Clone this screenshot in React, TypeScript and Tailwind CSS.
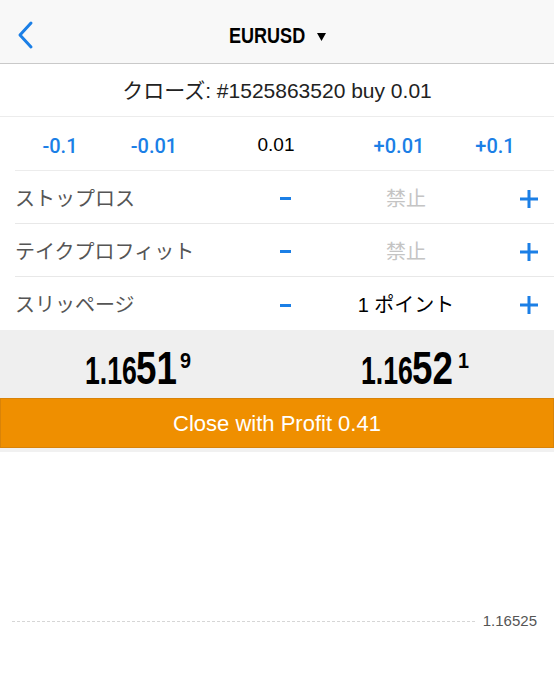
import { ReactNode } from 'react';

const BLUE = 'text-[#1b7fe6]';

const Minus = () => <span className="block w-[11px] h-[3px] bg-[#1b7fe6]" />;

const Plus = () => (
  <svg width="20" height="20" viewBox="0 0 20 20">
    <path d="M10 1v18M1 10h18" stroke="#1b7fe6" strokeWidth="3" />
  </svg>
);

const Price = ({ main, sup, supGap }: { main: string; sup: string; supGap: string }) => (
  <div className="leading-none whitespace-nowrap font-bold text-black">
    <span className="inline-block w-[51px] text-[38px] origin-left scale-x-[0.7]">1.16</span>
    <span className="inline-block w-[41px] text-[46px] origin-left scale-x-[0.8]">{main}</span>
    <span className={`inline-block text-[22px] align-[16px] origin-left scale-x-[0.9] ${supGap}`}>{sup}</span>
  </div>
);

const Row = ({ label, value, muted, last }: { label: string; value: ReactNode; muted?: boolean; last?: boolean }) => (
  <div className={`flex items-center h-[53px] ml-[15px] pt-[3px] ${last ? '' : 'border-b border-[#e8e8e8]'}`}>
    <div className="w-[240px] text-[20px] text-[#555]">{label}</div>
    <div className="w-[60px] flex justify-center">
      <Minus />
    </div>
    <div className={`w-[182px] text-center text-[20px] ${muted ? 'text-[#c4c4c4]' : 'text-black'}`}>{value}</div>
    <div className="flex-1 flex justify-center pl-[6px]">
      <Plus />
    </div>
  </div>
);

export default function App() {
  return (
    <div className="w-[554px] h-[687px] bg-white overflow-hidden [font-family:'Liberation_Sans','Noto_Sans_CJK_JP',sans-serif]">
      <div className="relative h-[64px] bg-[#f8f8f8] border-b border-[#c9c9c9] flex items-center justify-center">
        <svg className="absolute left-[16px] top-[20px]" width="20" height="30" viewBox="0 0 20 30">
          <path d="M15 3L4 15l11 12" fill="none" stroke="#1b7fe6" strokeWidth="3" strokeLinecap="round" strokeLinejoin="round" />
        </svg>
        <div className="flex items-center mt-[8px]">
          <span className="inline-block w-[76px] text-[22px] font-bold text-black whitespace-nowrap origin-left scale-x-[0.82]">
            EURUSD
          </span>
          <svg className="ml-[12px] mt-[2px]" width="9" height="8" viewBox="0 0 9 8">
            <path d="M0 0h9L4.5 8z" fill="#000" />
          </svg>
        </div>
      </div>

      <div className="h-[53px] flex items-center justify-center pt-[2px] border-b border-[#ececec] text-[21px] text-[#222]">
        クローズ: #1525863520 buy 0.01
      </div>

      <div className="flex items-center h-[54px] ml-[15px] pt-[4px] border-b border-[#ececec] text-[20px] [font-family:Roboto,'Liberation_Sans',sans-serif]">
        <div className={`w-[90px] text-center font-medium ${BLUE}`}>-0.1</div>
        <div className={`w-[98px] text-center font-medium ${BLUE}`}>-0.01</div>
        <div className="w-[146px] text-center text-black text-[19px] [font-family:'Liberation_Sans',sans-serif]">0.01</div>
        <div className={`w-[100px] text-center font-medium ${BLUE}`}>+0.01</div>
        <div className={`w-[92px] text-center font-medium ${BLUE}`}>+0.1</div>
      </div>

      <Row label="ストップロス" value="禁止" muted />
      <Row label="テイクプロフィット" value="禁止" muted />
      <Row label="スリッページ" value="1 ポイント" last />

      <div className="h-[68px] bg-[#efefef] flex items-center pt-[8px]">
        <div className="w-[277px] flex justify-center">
          <Price main="51" sup="9" supGap="ml-[3px]" />
        </div>
        <div className="w-[277px] flex justify-center">
          <Price main="52" sup="1" supGap="ml-[5px]" />
        </div>
      </div>

      <div className="h-[50px] bg-[#ef8f00] border border-[#d98308] flex items-center justify-center text-[22px] text-white">
        Close with Profit 0.41
      </div>
      <div className="h-[4px] bg-[#f1f1f1]" />

      <div className="h-[158px]" />
      <div className="flex items-center pl-[12px] pr-[17px]">
        <div className="flex-1 border-t border-dashed border-[#d6d6d6]" />
        <span className="ml-[8px] text-[15px] text-[#555]">1.16525</span>
      </div>
    </div>
  );
}
